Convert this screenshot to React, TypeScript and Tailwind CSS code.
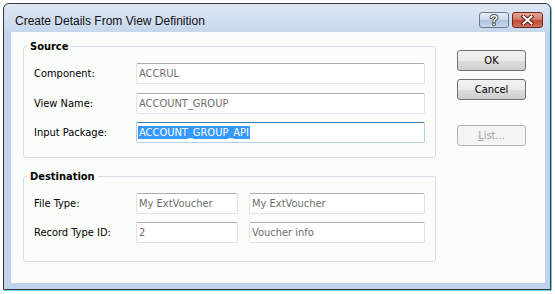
import React from "react";

function Field({
  value,
  wClass,
  focused,
}: {
  value: string;
  wClass: string;
  focused?: boolean;
}) {
  return (
    <div
      className={
        "h-[21px] flex items-center pl-[2px] border rounded-[2px] bg-white overflow-hidden whitespace-nowrap " +
        wClass +
        (focused
          ? " border-[#b6cfe8] border-t-[#3d7bad]"
          : " border-[#e2e3ea] border-t-[#abadb3] text-[#6d6d6d]")
      }
    >
      {focused ? (
        <span className="bg-[#3399ff] text-white ml-[-1px] pl-[1px] pr-[1px] leading-[13px]">
          {value}
        </span>
      ) : (
        value
      )}
    </div>
  );
}

function Row({ label, children, className }: { label: string; children: React.ReactNode; className?: string }) {
  return (
    <div className={"flex items-center " + (className ?? "")}>
      <div className="w-[102px] shrink-0">{label}</div>
      {children}
    </div>
  );
}

function Group({
  title,
  hClass,
  children,
}: {
  title: string;
  hClass: string;
  children: React.ReactNode;
}) {
  return (
    <div className={"relative w-[413px] border border-[#d5dfe5] rounded-[3px] pl-[10px] pt-[16px] " + hClass}>
      <div className="absolute left-[3px] top-[-7px] px-[3px] bg-[#fbfdfb] font-bold leading-[14px] text-black">
        {title}
      </div>
      {children}
    </div>
  );
}

function WinButton({ label, disabled, className }: { label: React.ReactNode; disabled?: boolean; className?: string }) {
  return (
    <div
      className={
        "w-[69px] h-[21px] rounded-[3px] border flex items-center justify-center " +
        (disabled
          ? "border-[#adb2b5] bg-[#f4f4f4] text-[#a0a0a0] "
          : "border-[#707070] bg-[linear-gradient(#f2f2f2_0%,#ebebeb_50%,#dddddd_51%,#cfcfcf_100%)] text-black ") +
        (className ?? "")
      }
    >
      {label}
    </div>
  );
}

export default function App() {
  return (
    <div className="w-[555px] h-[294px] bg-white text-[11px] leading-[13px] text-black font-['DejaVu_Sans_Condensed','Liberation_Sans',sans-serif] overflow-hidden">
      <div className="ml-[3px] mt-[3px] w-[548px] h-[287px] border border-[#3a3a3a] rounded-t-[6px] bg-[#bfd3ec] flex flex-col shadow-[1px_1px_0_#63d0ec]">
        {/* Title bar */}
        <div className="h-[28px] flex items-start pl-[11px] pr-[7px] rounded-t-[6px] bg-[linear-gradient(#dde7f3,#c6d7ec)]">
          <div className="flex-1 text-[12px] leading-[14px] font-['Liberation_Sans',sans-serif] text-[#111] pt-[10px]">
            Create Details From View Definition
          </div>
          <div className="flex gap-[3px] mt-[8px]">
            <div className="w-[30px] h-[16px] rounded-[3px] border border-[#6d7a8a] bg-[linear-gradient(#e6eef8_0%,#c9d8ea_50%,#aec3dd_51%,#c3d6ee_100%)] flex items-center justify-center">
              <svg width="10" height="12" viewBox="0 0 10 12">
                <path d="M2.2 3.6 C2.2 1.2 7.8 1.2 7.8 3.6 C7.8 5.4 5 5.4 5 7.6" fill="none" stroke="#4a4a4a" strokeWidth="3.4" strokeLinecap="round" />
                <rect x="3.3" y="8.7" width="3.4" height="3" fill="#4a4a4a" />
                <path d="M2.2 3.6 C2.2 1.2 7.8 1.2 7.8 3.6 C7.8 5.4 5 5.4 5 7.6" fill="none" stroke="#ffffff" strokeWidth="1.6" strokeLinecap="round" />
                <rect x="4.2" y="9.5" width="1.6" height="1.5" fill="#ffffff" />
              </svg>
            </div>
            <div className="w-[31px] h-[16px] rounded-[3px] border border-[#6d2a24] bg-[linear-gradient(#e8a493_0%,#d67b68_45%,#c24a33_55%,#d2715a_100%)] flex items-center justify-center">
              <svg width="13" height="10" viewBox="0 0 13 10">
                <path d="M2.5 1.5 L10.5 8.5 M10.5 1.5 L2.5 8.5" stroke="#5a1f18" strokeWidth="4" strokeLinecap="square" />
                <path d="M2.5 1.5 L10.5 8.5 M10.5 1.5 L2.5 8.5" stroke="#ffffff" strokeWidth="2" strokeLinecap="square" />
              </svg>
            </div>
          </div>
        </div>
        {/* Client */}
        <div className="ml-[7px] w-[534px] h-[251px] bg-[#fbfdfb] flex items-start pl-[12px] pt-[14px]">
          <div className="flex flex-col gap-[18px]">
            <Group title="Source" hClass="h-[112px]">
              <Row label="Component:">
                <Field value="ACCRUL" wClass="w-[289px]" />
              </Row>
              <Row label="View Name:" className="mt-[9px]">
                <Field value="ACCOUNT_GROUP" wClass="w-[289px]" />
              </Row>
              <Row label="Input Package:" className="mt-[8px]">
                <Field value="ACCOUNT_GROUP_API" wClass="w-[289px]" focused />
              </Row>
            </Group>
            <Group title="Destination" hClass="h-[86px]">
              <Row label="File Type:">
                <Field value="My ExtVoucher" wClass="w-[102px]" />
                <div className="w-[11px]" />
                <Field value="My ExtVoucher" wClass="w-[176px]" />
              </Row>
              <Row label="Record Type ID:" className="mt-[8px]">
                <Field value="2" wClass="w-[102px]" />
                <div className="w-[11px]" />
                <Field value="Voucher info" wClass="w-[176px]" />
              </Row>
            </Group>
          </div>
          <div className="ml-[21px] mt-[4px] flex flex-col">
            <WinButton label="OK" />
            <WinButton label="Cancel" className="mt-[8px]" />
            <WinButton
              label={
                <span>
                  <span className="underline">L</span>ist...
                </span>
              }
              disabled
              className="mt-[25px]"
            />
          </div>
        </div>
      </div>
    </div>
  );
}
